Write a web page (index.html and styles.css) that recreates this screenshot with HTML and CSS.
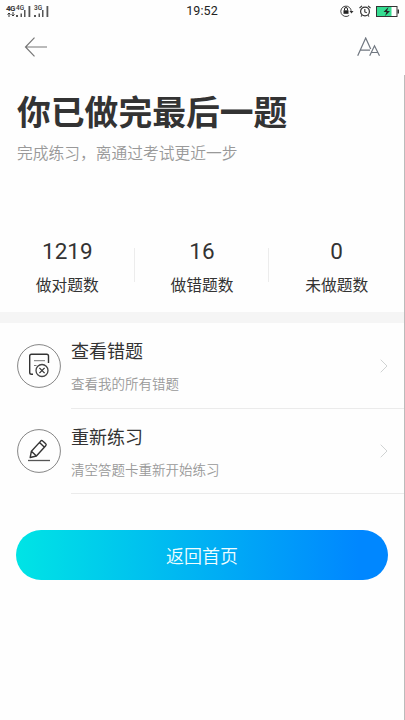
FILE: index.html
```html
<!DOCTYPE html>
<html lang="zh-CN">
<head>
<meta charset="utf-8">
<title>练习完成</title>
<link rel="stylesheet" href="styles.css">
</head>
<body>
<header class="status">
  <div class="signals">
    <div class="net"><span class="net-name">4G</span><svg width="8" height="5" viewBox="0 0 8 5"><path d="M2 5V1M.5 2.500 2 1l1.500 1.500M6 0v4M4.500 2.500 6 4l1.500-1.500" fill="none" stroke="#333"/></svg></div>
    <div class="sim"><span class="sim-name">4G</span><svg width="16" height="11" viewBox="0 0 16 11"><path d="M0 9h2v2H0zM4.500 7.500h1.500V11H4.500zM8 4h1.500v7H8zM12.500 0h1.800v11h-1.800z" fill="#555"/></svg></div>
    <div class="sim"><span class="sim-name">3G</span><svg width="16" height="11" viewBox="0 0 16 11"><path d="M0 9h2v2H0zM4.500 7.500h1.500V11H4.500zM8 4h1.500v7H8zM12.500 0h1.800v11h-1.800z" fill="#555"/></svg></div>
  </div>
  <time class="clock">19:52</time>
  <div class="indicators">
    <svg width="14" height="12" viewBox="0 0 14 12"><path d="M9.200 10.400A5.200 5.200 0 1 1 11.200 6.500" fill="none" stroke="#444"/><path d="M9.500 6h4L11.500 8.500z" fill="#333"/><path d="M3.500 5.300h5v3.500h-5z" fill="#222"/><path d="M4.500 5.500V4a1.500 1.500 0 0 1 3 0v1.500" fill="none" stroke="#222"/></svg>
    <svg width="12" height="12" viewBox="0 0 12 12"><circle cx="6" cy="6.500" r="4.400" fill="none" stroke="#333" stroke-width="1.200"/><path d="M.5 3 3 .8M11.500 3 9 .8M5.800 4v3l2 .8M3 10.300 2 11.500M9 10.300l1 1.200" fill="none" stroke="#333" stroke-width="1.100"/></svg>
    <svg width="23" height="11" viewBox="0 0 23 11"><rect x=".5" y=".5" width="20.500" height="10" fill="#fff" stroke="#333"/><path d="M1 1h14.500v9H1z" fill="#35dc91"/><path d="M21.500 3.500H23v4h-1.500z" fill="#333"/><path d="M12.500 1 7.500 6h3l-1.500 4 5-5h-3z" fill="#222"/></svg>
  </div>
</header>
<nav class="nav">
  <svg width="24" height="20" viewBox="0 0 24 20"><path d="M23 10H2M10.500 .7 1.500 10l9 9.300" fill="none" stroke="#777" stroke-width="1.200"/></svg>
  <svg width="24" height="20" viewBox="0 0 24 20"><path d="M.7 18.800 8.700 1l5 11M3.300 13.200H13M12.700 18.800 17.500 8.800l5 10M14.200 15.500h6.700" fill="none" stroke="#707780" stroke-width="1.200"/></svg>
</nav>
<main class="page">
  <section class="intro">
    <h1>你已做完最后一题</h1>
    <p>完成练习，离通过考试更近一步</p>
  </section>
  <section class="stats">
    <div class="stat"><b>1219</b><span>做对题数</span></div>
    <div class="stat"><b>16</b><span>做错题数</span></div>
    <div class="stat"><b>0</b><span>未做题数</span></div>
  </section>
  <section class="actions">
    <div class="action">
      <svg class="badge" width="44" height="44" viewBox="0 0 44 44"><circle cx="22" cy="22" r="21.400" fill="none" stroke="#777" stroke-width=".9"/><path d="M16 30.300h-1.500q-1.800 0-1.800-1.800V12q0-1.800 1.800-1.800h15.200q1.800 0 1.800 1.800v7" fill="none" stroke="#333" stroke-width="1.400"/><path d="M17 16.700h11M17 21.500h2.500" stroke="#777" fill="none"/><circle cx="25" cy="26.500" r="6" fill="#fff" stroke="#444" stroke-width="1.300"/><path d="m22.400 23.900 5.200 5.200m0-5.200-5.200 5.200" stroke="#333" stroke-width="1.300"/></svg>
      <div class="body">
        <div class="words"><h2>查看错题</h2><p>查看我的所有错题</p></div>
        <svg class="chevron" width="8" height="14" viewBox="0 0 8 14"><path d="m.7.7 6.300 6.300-6.300 6.300" fill="none" stroke="#d0d3d3"/></svg>
      </div>
    </div>
    <div class="action">
      <svg class="badge" width="44" height="44" viewBox="0 0 44 44"><circle cx="22" cy="22" r="21.400" fill="none" stroke="#777" stroke-width=".9"/><path d="m13.200 28.500 1.200-6.300 9.300-10.100q1-1 2 0l3 2.700q1 1 0 2L19.400 27z M14.400 22.200l5 4.800M22.500 13.500l5 4.700" fill="none" stroke="#333" stroke-width="1.400" stroke-linejoin="round"/><path d="M11 31.500h22" stroke="#555" stroke-width="1.300"/></svg>
      <div class="body">
        <div class="words"><h2>重新练习</h2><p>清空答题卡重新开始练习</p></div>
        <svg class="chevron" width="8" height="14" viewBox="0 0 8 14"><path d="m.7.7 6.300 6.300-6.300 6.300" fill="none" stroke="#d0d3d3"/></svg>
      </div>
    </div>
  </section>
  <button class="home">返回首页</button>
</main>
</body>
</html>
```
FILE: styles.css
```css
* { box-sizing: border-box; margin: 0; padding: 0; }
body {
  width: 405px;
  height: 720px;
  display: flex;
  flex-direction: column;
  overflow: hidden;
  background: #fefefe;
  color: #333;
  font-family: Roboto, "Noto Sans CJK SC", sans-serif;
}
svg { display: block; flex: none; }
.status {
  height: 20px;
  display: grid;
  grid-template-columns: 1fr auto 1fr;
  align-items: center;
  padding: 0 6px 0 5px;
}
.signals { display: flex; height: 11px; }
.net { width: 11px; display: flex; flex-direction: column; align-items: center; }
.net-name { font-size: 8px; line-height: 6px; font-weight: 700; letter-spacing: -0.5px; }
.sim { width: 18px; display: grid; }
.sim > * { grid-area: 1 / 1; }
.sim-name { font-size: 6.500px; line-height: 5px; font-weight: 500; }
.clock { font-size: 12.5px; line-height: 22px; color: #222; font-weight: 400; letter-spacing: 0.1px; }
.indicators { display: flex; justify-content: flex-end; align-items: center; gap: 5px; }
.nav {
  height: 55px;
  display: flex;
  justify-content: space-between;
  padding: 17px 24px 0 24px;
}
.page { flex: 1; border-right: 1px solid #bbb; }
.intro { height: 159px; padding: 14px 17px 0; }
h1 { font-size: 33.8px; line-height: 50px; font-weight: 700; white-space: nowrap; }
.intro p { font-size: 15.75px; line-height: 24px; margin-top: 3px; color: #999; font-weight: 350; }
.stats {
  height: 89px;
  display: grid;
  grid-template-columns: repeat(3, 1fr);
  border-bottom: 11px solid #f5f5f5;
}
.stat {
  display: flex;
  flex-direction: column;
  align-items: center;
  padding-top: 1px;
  background: linear-gradient(#ececec, #ececec) right 14px / 1px 34px no-repeat;
}
.stat:last-child { background: none; }
.stat b { font-size: 22.5px; line-height: 33px; font-weight: 400; }
.stat span { font-size: 15.75px; line-height: 24px; margin-top: 6px; }
.action { height: 85px; display: flex; padding-left: 17px; }
.action:first-child { height: 86px; }
.badge { margin-top: 21px; }
.action:last-child .badge { margin-top: 20px; }
.body {
  flex: 1;
  margin-left: 10px;
  padding-right: 16px;
  border-bottom: 1px solid #ebebeb;
  display: flex;
  align-items: center;
  justify-content: space-between;
}
.words { align-self: flex-start; padding-top: 15px; }
h2 { font-size: 18px; line-height: 27px; font-weight: 400; }
.words p { font-size: 13.5px; line-height: 20px; margin-top: 9px; color: #999; font-weight: 350; }
.home {
  display: block;
  width: 372px;
  height: 50px;
  margin: 36px 0 0 16px;
  border: 0;
  border-radius: 25px;
  background: linear-gradient(90deg, #00e4e5, #0087ff 92%);
  color: #effdff;
  font: 350 18px/48px "Noto Sans CJK SC", sans-serif;
}
```
